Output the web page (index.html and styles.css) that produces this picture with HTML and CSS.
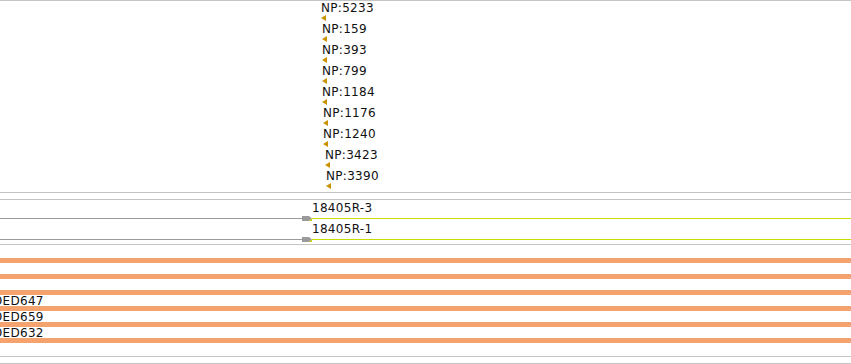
FILE: index.html
```html
<!DOCTYPE html>
<html lang="en">

<head>
    <meta charset="UTF-8">
    <meta name="viewport" content="width=device-width, initial-scale=1.0">
    <title>Tracks</title>
    <link rel="stylesheet" href="styles.css">
</head>

<body>
    <div class="viewer">
        <div class="track np_track">
            <div class="feature" style="padding-left: 321px">
                <div class="feature_label">NP:5233</div>
                <svg class="strand" width="5" height="6" viewBox="0 0 5 6"><polygon points="0,3 5,0 5,6" /></svg>
            </div>
            <div class="feature" style="padding-left: 322px">
                <div class="feature_label">NP:159</div>
                <svg class="strand" width="5" height="6" viewBox="0 0 5 6"><polygon points="0,3 5,0 5,6" /></svg>
            </div>
            <div class="feature" style="padding-left: 322px">
                <div class="feature_label">NP:393</div>
                <svg class="strand" width="5" height="6" viewBox="0 0 5 6"><polygon points="0,3 5,0 5,6" /></svg>
            </div>
            <div class="feature" style="padding-left: 322px">
                <div class="feature_label">NP:799</div>
                <svg class="strand" width="5" height="6" viewBox="0 0 5 6"><polygon points="0,3 5,0 5,6" /></svg>
            </div>
            <div class="feature" style="padding-left: 322px">
                <div class="feature_label">NP:1184</div>
                <svg class="strand" width="5" height="6" viewBox="0 0 5 6"><polygon points="0,3 5,0 5,6" /></svg>
            </div>
            <div class="feature" style="padding-left: 323px">
                <div class="feature_label">NP:1176</div>
                <svg class="strand" width="5" height="6" viewBox="0 0 5 6"><polygon points="0,3 5,0 5,6" /></svg>
            </div>
            <div class="feature" style="padding-left: 323px">
                <div class="feature_label">NP:1240</div>
                <svg class="strand" width="5" height="6" viewBox="0 0 5 6"><polygon points="0,3 5,0 5,6" /></svg>
            </div>
            <div class="feature" style="padding-left: 325px">
                <div class="feature_label">NP:3423</div>
                <svg class="strand" width="5" height="6" viewBox="0 0 5 6"><polygon points="0,3 5,0 5,6" /></svg>
            </div>
            <div class="feature" style="padding-left: 326px">
                <div class="feature_label">NP:3390</div>
                <svg class="strand" width="5" height="6" viewBox="0 0 5 6"><polygon points="0,3 5,0 5,6" /></svg>
            </div>
        </div>

        <div class="track read_track">
            <div class="read read_first">
                <div class="read_label">18405R-3</div>
                <div class="read_line">
                    <span class="read_before"></span>
                    <svg class="read_head" width="10" height="5" viewBox="0 0 10 5"><polygon points="0,0 7,0 10,2.5 7,5 0,5" /><polygon class="tip" points="7,5 10,2.5 10,5" /></svg>
                    <span class="read_after"></span>
                </div>
            </div>
            <div class="read read_second">
                <div class="read_label">18405R-1</div>
                <div class="read_line">
                    <span class="read_before"></span>
                    <svg class="read_head" width="10" height="5" viewBox="0 0 10 5"><polygon points="0,0 7,0 10,2.5 7,5 0,5" /><polygon class="tip" points="7,5 10,2.5 10,5" /></svg>
                    <span class="read_after"></span>
                </div>
            </div>
        </div>

        <div class="track bar_track">
            <div class="bar_row"><div class="bar"></div><div class="bar_gap"></div></div>
            <div class="bar_row"><div class="bar"></div><div class="bar_gap"></div></div>
            <div class="bar_row"><div class="bar"></div><div class="bar_gap"><span class="bar_label">DED647</span></div></div>
            <div class="bar_row"><div class="bar"></div><div class="bar_gap"><span class="bar_label">DED659</span></div></div>
            <div class="bar_row"><div class="bar"></div><div class="bar_gap"><span class="bar_label">DED632</span></div></div>
            <div class="bar_row"><div class="bar"></div></div>
        </div>

        <div class="track empty_track"></div>
    </div>
</body>

</html>
```

FILE: styles.css
```css
* {
    margin: 0;
    padding: 0;
}

body {
    font-family: "DejaVu Sans", sans-serif;
    font-size: 12px;
    color: #111;
    background: #fff;
    overflow: hidden;
}

.viewer {
    width: 851px;
    height: 364px;
    overflow: hidden;
}

.track {
    border-top: 1px solid #c4c4c4;
}

/* NP features */
.np_track {
    height: 191px;
    border-bottom: 1px solid #c4c4c4;
}

.feature {
    height: 21px;
}

.feature_label {
    height: 14px;
    line-height: 15px;
    white-space: nowrap;
    letter-spacing: 0.3px;
}

.strand {
    display: block;
    fill: #c99200;
}

/* reads */
.read_track {
    margin-top: 6px;
    height: 44px;
    border-bottom: 1px solid #c4c4c4;
}

.read_label {
    padding-left: 312px;
    letter-spacing: 0.3px;
}

.read_first .read_label {
    height: 18px;
    line-height: 17px;
}

.read_second .read_label {
    height: 20px;
    line-height: 21px;
}

.read_line {
    display: flex;
    align-items: center;
    height: 1px;
}

.read_before {
    flex: 0 0 302px;
    height: 1px;
    background: #9a9a9a;
}

.read_head {
    flex: none;
    fill: #9a9a9a;
    overflow: visible;
}

.read_head .tip {
    fill: #c2d400;
}

.read_after {
    flex: 1;
    height: 1px;
    background: #c8dc00;
}

/* coverage bars */
.bar_track {
    border-top: none;
    padding-top: 13px;
    height: 98px;
}

.bar_row {
    height: 16px;
}

.bar {
    height: 5px;
    background: #f4a26e;
}

.bar_gap {
    height: 11px;
    line-height: 12px;
    white-space: nowrap;
}

.bar_label {
    display: inline-block;
    margin-left: -7px;
    letter-spacing: 0.3px;
}

.empty_track {
    height: 6px;
    border-bottom: 1px solid #c4c4c4;
}
```
